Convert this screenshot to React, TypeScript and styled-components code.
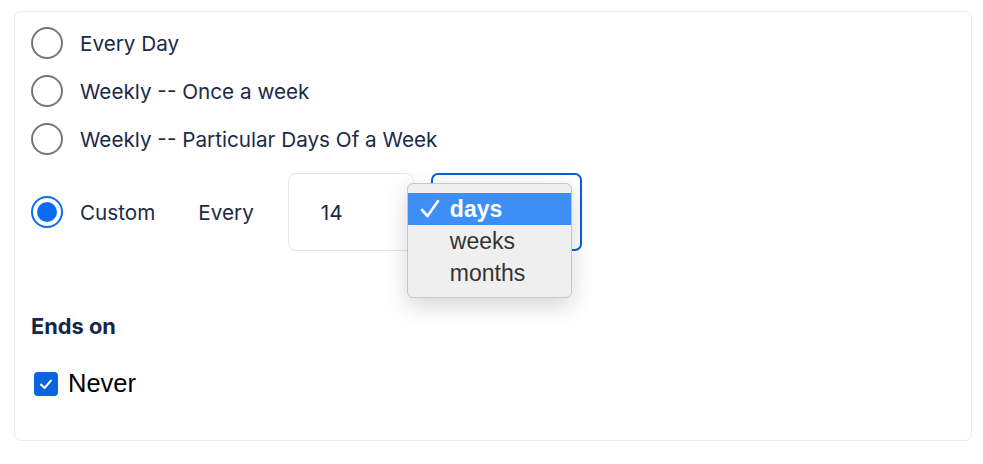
import { useState } from "react";
import { styled, createGlobalStyle } from "styled-components";

const GlobalStyle = createGlobalStyle`
  body {
    margin: 0;
    background: #ffffff;
    font-family: "Inter", "Liberation Sans", sans-serif;
  }
`;

const Card = styled.div`
  margin: 11px 11px 0 14px;
  width: 958px;
  height: 430px;
  box-sizing: border-box;
  border: 1px solid #ececec;
  border-radius: 7px;
  padding: 7px 17px 0 16px;
`;

const Row = styled.label`
  display: flex;
  align-items: center;
  height: 48px;
  gap: 17px;
  color: #1b2a48;
  font-size: 20.7px;
  font-weight: 400;
  cursor: pointer;
`;

const CustomRow = styled(Row)`
  height: 78px;
  margin-top: 10px;
`;

const Radio = styled.span<{ $checked: boolean }>`
  width: 32px;
  height: 32px;
  box-sizing: border-box;
  border-radius: 50%;
  border: 2px solid ${(p) => (p.$checked ? "#0a6cf0" : "#767676")};
  display: flex;
  align-items: center;
  justify-content: center;
  flex-shrink: 0;
  &::after {
    content: "";
    display: ${(p) => (p.$checked ? "block" : "none")};
    width: 20px;
    height: 20px;
    border-radius: 50%;
    background: #0a6cf0;
  }
`;

const EveryLabel = styled.span`
  margin-left: 26px;
  margin-right: 17px;
`;

const NumberBox = styled.div`
  width: 126px;
  height: 78px;
  box-sizing: border-box;
  border: 1px solid #e4e7ec;
  border-radius: 8px;
  display: flex;
  align-items: center;
  padding-left: 32px;
  color: #1b2a48;
  font-size: 20.7px;
`;

const SelectWrap = styled.div`
  position: relative;
`;

const SelectBox = styled.div`
  width: 151px;
  height: 78px;
  box-sizing: border-box;
  border: 2px solid #0b5ed7;
  border-radius: 7px;
  background: #fff;
`;

const Popup = styled.ul`
  position: absolute;
  left: -24px;
  top: 10px;
  width: 165px;
  box-sizing: border-box;
  margin: 0;
  padding: 9px 0 8px;
  list-style: none;
  background: #efeff0;
  border: 1px solid #c6c6c8;
  border-radius: 6px;
  box-shadow: 0 8px 22px rgba(0, 0, 0, 0.16);
  font-family: "Liberation Sans", Arial, sans-serif;
  font-size: 23px;
`;

const Option = styled.li<{ $active?: boolean }>`
  position: relative;
  height: 32px;
  line-height: 32px;
  padding-left: 42px;
  color: ${(p) => (p.$active ? "#ffffff" : "#333333")};
  background: ${(p) => (p.$active ? "#3d8ef5" : "transparent")};
  font-weight: ${(p) => (p.$active ? 600 : 400)};
`;

const Check = styled.svg`
  position: absolute;
  left: 12px;
  top: 6px;
`;

const Heading = styled.h3`
  margin: 62px 0 0 0;
  font-size: 21.8px;
  font-weight: 700;
  color: #15284a;
  line-height: 26px;
`;

const NeverRow = styled.label`
  display: flex;
  align-items: center;
  gap: 10px;
  margin-top: 30px;
  padding-left: 3px;
  font-family: "Liberation Sans", Arial, sans-serif;
  font-size: 25.5px;
  color: #000;
`;

const CheckBox = styled.span`
  width: 24px;
  height: 24px;
  border-radius: 4px;
  background: #0b63de;
  display: flex;
  align-items: center;
  justify-content: center;
`;

const options = ["Every Day", "Weekly -- Once a week", "Weekly -- Particular Days Of a Week"];

function App() {
  const [selected, setSelected] = useState("Custom");

  return (
    <>
      <GlobalStyle />
      <Card>
        {options.map((o) => (
          <Row key={o} onClick={() => setSelected(o)}>
            <Radio $checked={selected === o} />
            {o}
          </Row>
        ))}
        <CustomRow onClick={() => setSelected("Custom")}>
          <Radio $checked={selected === "Custom"} />
          Custom
          <EveryLabel>Every</EveryLabel>
          <NumberBox>14</NumberBox>
          <SelectWrap>
            <SelectBox />
            <Popup>
              <Option $active>
                <Check width="20" height="20" viewBox="0 0 20 20">
                  <path d="M2 11 L7.5 17 L18 2" fill="none" stroke="#fff" strokeWidth="2.6" strokeLinecap="round" strokeLinejoin="round" />
                </Check>
                days
              </Option>
              <Option>weeks</Option>
              <Option>months</Option>
            </Popup>
          </SelectWrap>
        </CustomRow>
        <Heading>Ends on</Heading>
        <NeverRow>
          <CheckBox>
            <svg width="16" height="16" viewBox="0 0 16 16">
              <path d="M3 8.5 L6.5 12 L13 4.5" fill="none" stroke="#fff" strokeWidth="2" strokeLinecap="round" strokeLinejoin="round" />
            </svg>
          </CheckBox>
          Never
        </NeverRow>
      </Card>
    </>
  );
}

export default App;
